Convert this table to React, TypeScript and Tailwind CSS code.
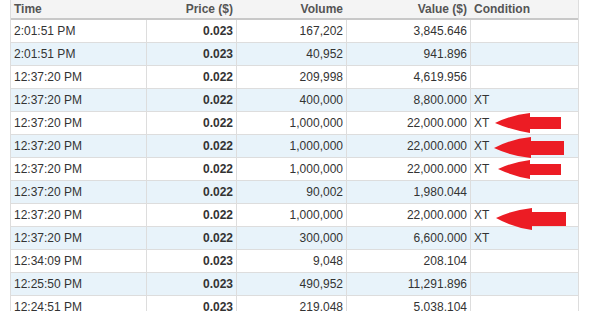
const rows = [
  ["2:01:51 PM", "0.023", "167,202", "3,845.646", ""],
  ["2:01:51 PM", "0.023", "40,952", "941.896", ""],
  ["12:37:20 PM", "0.022", "209,998", "4,619.956", ""],
  ["12:37:20 PM", "0.022", "400,000", "8,800.000", "XT"],
  ["12:37:20 PM", "0.022", "1,000,000", "22,000.000", "XT"],
  ["12:37:20 PM", "0.022", "1,000,000", "22,000.000", "XT"],
  ["12:37:20 PM", "0.022", "1,000,000", "22,000.000", "XT"],
  ["12:37:20 PM", "0.022", "90,002", "1,980.044", ""],
  ["12:37:20 PM", "0.022", "1,000,000", "22,000.000", "XT"],
  ["12:37:20 PM", "0.022", "300,000", "6,600.000", "XT"],
  ["12:34:09 PM", "0.023", "9,048", "208.104", ""],
  ["12:25:50 PM", "0.023", "490,952", "11,291.896", ""],
  ["12:24:51 PM", "0.023", "219,048", "5,038.104", ""],
];

const cols = "grid grid-cols-[136px_90px_110px_124px_107px]";

const Arrows = () => (
  <svg className="absolute inset-0 pointer-events-none" width="590" height="311" viewBox="0 0 590 311">
    <g fill="#ec1c24">
      <path d="M495 123 Q511 115 530 113 L530 117 L561 117 L561 129 L530 129 L530 133 Q511 130 495 123 Z" />
      <path d="M494 148 Q511 139 531 137 L531 141 L564 141 L564 155 L531 155 L531 158 Q511 156 494 148 Z" />
      <path d="M498 169 Q513 162 530 160 L530 164 L561 164 L561 175 L530 175 L530 179 Q513 176 498 169 Z" />
      <path d="M496 218 Q512 210 532 208 L532 212 L566 212 L566 226 L532 226 L532 230 Q512 227 496 218 Z" />
    </g>
  </svg>
);

export default function App() {
  return (
    <div className="relative w-[590px] h-[311px] overflow-hidden bg-white font-['Liberation_Sans',Arial,sans-serif] text-[12px] text-[#333]">
      <div className="ml-[10px] w-[569px] border-x border-[#ddd]">
        <div className={`${cols} h-[20px] bg-[#f4f4f4] border-b-2 border-[#c8c8c8] font-bold text-[#555] leading-[18px]`}>
          <div className="px-[3px]">Time</div>
          <div className="px-[4px] text-right">Price ($)</div>
          <div className="px-[4px] text-right">Volume</div>
          <div className="px-[4px] text-right">Value ($)</div>
          <div className="px-[3px]">Condition</div>
        </div>
        {rows.map((r, i) => (
          <div
            key={i}
            className={`${cols} h-[23px] border-b border-[#ddd] leading-[22px] ${i % 2 === 1 ? "bg-[#e8f3fa]" : "bg-white"}`}
          >
            <div className="px-[3px] border-r border-[#ddd]">{r[0]}</div>
            <div className="px-[3px] border-r border-[#ddd] text-right font-bold">{r[1]}</div>
            <div className="px-[3px] border-r border-[#ddd] text-right">{r[2]}</div>
            <div className="px-[3px] border-r border-[#ddd] text-right">{r[3]}</div>
            <div className="px-[3px]">{r[4]}</div>
          </div>
        ))}
      </div>
      <Arrows />
    </div>
  );
}
